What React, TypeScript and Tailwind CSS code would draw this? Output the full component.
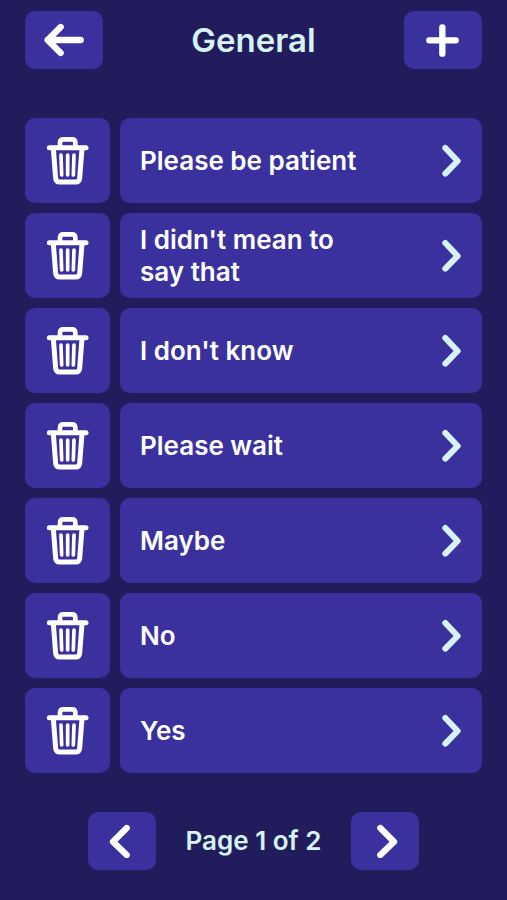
import React, { useState } from 'react';

const phrases = [
  'Please be patient',
  "I didn't mean to say that",
  "I don't know",
  'Please wait',
  'Maybe',
  'No',
  'Yes',
];

const stroke = {
  fill: 'none',
  stroke: 'currentColor',
  strokeLinecap: 'round',
  strokeLinejoin: 'round',
} as const;

const ArrowLeftIcon = () => (
  <svg viewBox="0 0 120 100" className="w-10 shrink-0" strokeWidth="19" {...stroke} aria-hidden="true">
    <path d="M110 51H11M50 12 11 51l39 39" />
  </svg>
);

const PlusIcon = () => (
  <svg viewBox="0 0 99 99" className="w-[33px] shrink-0" strokeWidth="19" {...stroke} aria-hidden="true">
    <path d="M49 10v79M10 49h79" />
  </svg>
);

const TrashIcon = () => (
  <svg viewBox="0 0 129 147" className="w-[43px] shrink-0" {...stroke} aria-hidden="true">
    <path strokeWidth="15" d="M10 35h110" />
    <path strokeWidth="14" d="M42 33V20c0-7 4-10 10-10h26c6 0 10 3 10 10v13" />
    <path strokeWidth="15" d="M22 38l7 89c1 7 4 11 11 11h50c7 0 10-4 11-11l7-89" />
    <path strokeWidth="11" d="M45 57l2 60M65 57v60M84 57l-2 60" />
  </svg>
);

const ChevronIcon = () => (
  <svg viewBox="0 0 60 99" className="w-5 shrink-0" strokeWidth="18" {...stroke} aria-hidden="true">
    <path d="M10 12l37 39-37 38" />
  </svg>
);

const PrevIcon = () => (
  <svg viewBox="0 0 78 102" className="w-[26px] shrink-0" strokeWidth="19" {...stroke} aria-hidden="true">
    <path d="M53 12 12 53l41 40" />
  </svg>
);

const NextIcon = () => (
  <svg viewBox="0 0 78 102" className="w-[26px] shrink-0" strokeWidth="19" {...stroke} aria-hidden="true">
    <path d="M25 12l41 41-41 40" />
  </svg>
);

const App = () => {
  const [items, setItems] = useState(phrases);

  return (
    <div className="min-h-screen bg-[#221b5c] px-[25px] pt-[11px] pb-[29px] font-['Inter','Liberation_Sans',sans-serif] font-semibold text-white">
      <header className="flex items-center justify-between">
        <button
          type="button"
          aria-label="Back"
          className="flex h-[58px] w-[78px] items-center justify-center rounded-[10px] bg-[#3a319f]"
        >
          <ArrowLeftIcon />
        </button>
        <h1 className="text-[33px] leading-10 text-[#d5f3f4]">General</h1>
        <button
          type="button"
          aria-label="Add phrase"
          className="flex h-[58px] w-[78px] items-center justify-center rounded-[10px] bg-[#3a319f]"
        >
          <PlusIcon />
        </button>
      </header>

      <ul className="mt-[49px] flex flex-col gap-[10px]">
        {items.map((item) => (
          <li key={item} className="flex h-[85px] gap-[10px]">
            <button
              type="button"
              aria-label={`Delete ${item}`}
              onClick={() => setItems(items.filter((i) => i !== item))}
              className="flex w-[85px] shrink-0 items-center justify-center rounded-[10px] bg-[#3a319f]"
            >
              <TrashIcon />
            </button>
            <button
              type="button"
              className="flex flex-1 items-center justify-between rounded-[10px] bg-[#3a319f] px-5 text-left"
            >
              <span className="max-w-[220px] text-[26px] leading-8">{item}</span>
              <span className="text-[#d5f3f4]">
                <ChevronIcon />
              </span>
            </button>
          </li>
        ))}
      </ul>

      <nav aria-label="Pages" className="mt-[39px] flex items-center justify-center gap-[30px]">
        <button
          type="button"
          aria-label="Previous page"
          className="flex h-[58px] w-[68px] items-center justify-center rounded-[10px] bg-[#3a319f]"
        >
          <PrevIcon />
        </button>
        <span className="text-[26px] leading-8 text-[#d5f3f4]">Page 1 of 2</span>
        <button
          type="button"
          aria-label="Next page"
          className="flex h-[58px] w-[68px] items-center justify-center rounded-[10px] bg-[#3a319f]"
        >
          <NextIcon />
        </button>
      </nav>
    </div>
  );
};

export default App;
